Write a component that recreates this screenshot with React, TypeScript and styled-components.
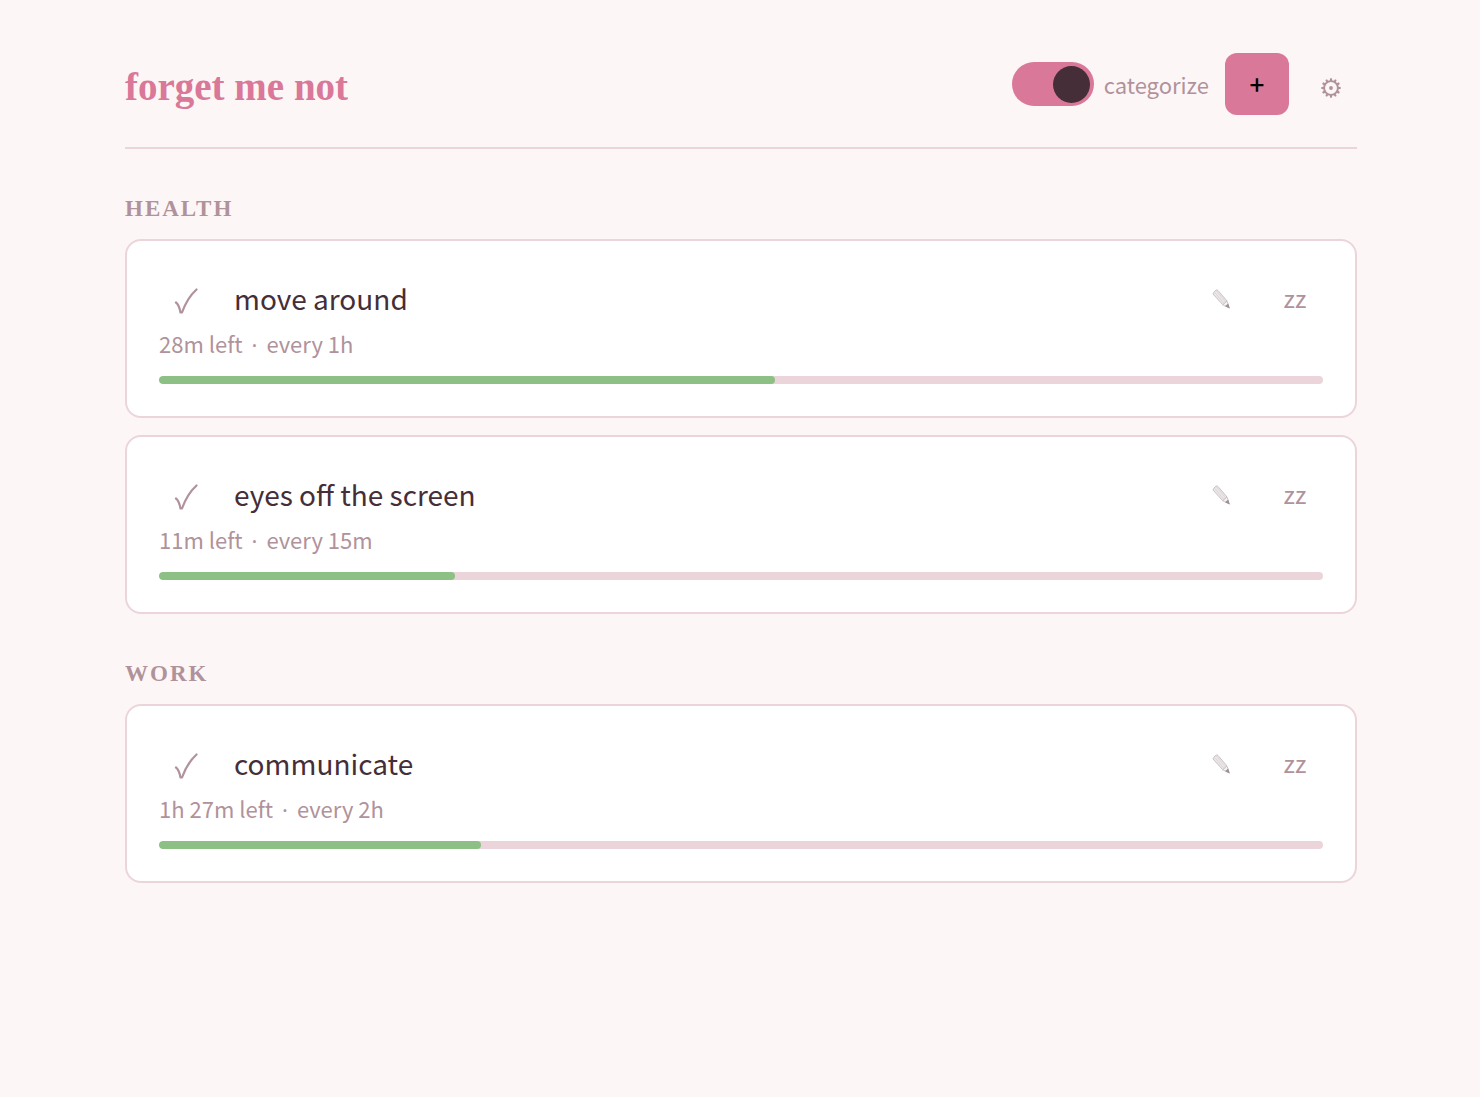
import React, { useState } from "react";
import styled, { createGlobalStyle } from "styled-components";

const color = {
  page: "#fdf6f6",
  card: "#ffffff",
  accent: "#d97898",
  line: "#ebd5da",
  text: "#452e38",
  muted: "#b0929b",
  fill: "#8cc084",
};

const sans = `"Noto Sans CJK SC", "Noto Sans", sans-serif`;
const serif = `"Liberation Serif", "Times New Roman", serif`;

const GlobalStyle = createGlobalStyle`
  * { box-sizing: border-box; }
  body {
    margin: 0;
    background: ${color.page};
    color: ${color.text};
    font-family: ${sans};
  }
`;

const Page = styled.main`
  padding: 53px 123px 64px 125px;
`;

const Header = styled.header`
  display: flex;
  align-items: center;
  justify-content: space-between;
  padding-bottom: 32px;
  border-bottom: 2px solid ${color.line};
`;

const Title = styled.h1`
  margin: 0;
  padding-top: 6px;
  font: 700 39px/54px ${serif};
  color: ${color.accent};
`;

const Controls = styled.div`
  display: flex;
  align-items: center;
  gap: 16px;
`;

const SwitchLabel = styled.label`
  display: flex;
  align-items: center;
  gap: 10px;
  font-size: 22px;
  line-height: 32px;
  color: ${color.muted};
  cursor: pointer;
`;

const Switch = styled.input`
  appearance: none;
  display: flex;
  align-items: center;
  width: 82px;
  height: 44px;
  margin: 0;
  padding: 4px;
  border-radius: 22px;
  background: ${color.line};
  cursor: pointer;

  &::before {
    content: "";
    width: 37px;
    height: 37px;
    border-radius: 50%;
    background: ${color.text};
  }

  &:checked {
    justify-content: flex-end;
    background: ${color.accent};
  }
`;

const AddButton = styled.button`
  width: 64px;
  height: 62px;
  padding: 0;
  border: 0;
  border-radius: 12px;
  background: ${color.accent};
  color: #000;
  font: 500 26px/62px ${sans};
  cursor: pointer;
`;

const IconButton = styled.button<{ $width: number }>`
  display: flex;
  align-items: center;
  justify-content: center;
  width: ${(p) => p.$width}px;
  height: 54px;
  padding: 0 0 2px;
  border: 0;
  background: none;
  color: ${color.muted};
  font: 400 24px/32px ${sans};
  cursor: pointer;
`;

const DoneButton = styled(IconButton)`
  padding: 2px 0 0;
`;

const SnoozeButton = styled(IconButton)`
  padding: 0 0 4px;
`;

const SettingsButton = styled(IconButton)`
  padding: 8px 0 0;
`;

const Group = styled.section`
  padding-top: 40px;
`;

const GroupTitle = styled.h2`
  margin: 0 0 10px;
  font: 700 23px/40px ${serif};
  letter-spacing: 2px;
  text-transform: uppercase;
  color: ${color.muted};
`;

const List = styled.ul`
  display: grid;
  gap: 17px;
  margin: 0;
  padding: 0;
  list-style: none;
`;

const Card = styled.li`
  padding: 32px;
  border: 2px solid ${color.line};
  border-radius: 16px;
  background: ${color.card};
`;

const Row = styled.div`
  display: flex;
  align-items: center;
  gap: 16px;
`;

const Name = styled.span`
  flex: 1;
  padding: 0 0 4px 5px;
  font-size: 28px;
  line-height: 50px;
`;

const Meta = styled.p`
  margin: 0 0 17px;
  font-size: 22px;
  line-height: 32px;
  color: ${color.muted};
`;

const Dot = styled.span`
  margin: 0 4px;
  font-family: "Noto Sans", sans-serif;
  line-height: 1;
`;

const Track = styled.div`
  height: 8px;
  overflow: hidden;
  border-radius: 4px;
  background: ${color.line};
`;

const Fill = styled.div`
  height: 100%;
  border-radius: 4px;
  background: ${color.fill};
`;

const CheckIcon = () => (
  <svg width="24" height="28" viewBox="0 0 24 28" fill="none" aria-hidden="true">
    <path
      d="M2 15.500C4 17 5.600 20.500 6.500 25.500H8C11 17 16 8.500 22.500 2.500"
      stroke="currentColor"
      strokeWidth="2.200"
      strokeLinecap="round"
      strokeLinejoin="round"
    />
  </svg>
);

const PencilIcon = () => (
  <svg width="20" height="22" viewBox="0 0 20 22" aria-hidden="true">
    <path
      d="M2 6Q2 4.500 5 2.200 6.300 1.500 7 2.500L16 13 11.800 16.800z"
      fill="#ebe6e8"
      stroke="#c9c2c5"
    />
    <path d="M3.700 4.500 13.100 15.500M5.500 3.100l9.300 10.900" stroke="#d6cfd2" strokeWidth=".7" />
    <path d="m11.800 16.800 4.200-3.800 2.300 7z" fill="#f6f2f4" stroke="#c3bbbe" strokeWidth=".8" />
    <path d="m14 18.200 3.200-2.800 1.600 5.200z" fill="#9a9095" />
  </svg>
);

const GearIcon = () => (
  <svg width="20" height="20" viewBox="0 0 20 20" fill="none" aria-hidden="true">
    <circle cx="10" cy="10" r="6.900" stroke="currentColor" strokeWidth="1.900" />
    <circle cx="10" cy="10" r="1.900" fill="currentColor" />
    {Array.from({ length: 12 }, (_, i) => (
      <path
        key={i}
        d="M8.700 3 9.100.3h1.800l.4 2.700z"
        fill="currentColor"
        transform={`rotate(${i * 30} 10 10)`}
      />
    ))}
  </svg>
);

type Reminder = { name: string; left: string; every: string; progress: number };

const groups: { title: string; items: Reminder[] }[] = [
  {
    title: "Health",
    items: [
      { name: "move around", left: "28m", every: "1h", progress: 52.9 },
      { name: "eyes off the screen", left: "11m", every: "15m", progress: 25.4 },
    ],
  },
  {
    title: "Work",
    items: [{ name: "communicate", left: "1h 27m", every: "2h", progress: 27.7 }],
  },
];

const ReminderCard = ({ name, left, every, progress }: Reminder) => (
  <Card>
    <Row>
      <DoneButton $width={54} aria-label={`Mark ${name} done`}>
        <CheckIcon />
      </DoneButton>
      <Name>{name}</Name>
      <IconButton $width={60} aria-label={`Edit ${name}`}>
        <PencilIcon />
      </IconButton>
      <SnoozeButton $width={56}>zz</SnoozeButton>
    </Row>
    <Meta>
      {left} left <Dot>·</Dot> every {every}
    </Meta>
    <Track>
      <Fill style={{ width: `${progress}%` }} />
    </Track>
  </Card>
);

export default function App() {
  const [categorize, setCategorize] = useState(true);

  return (
    <>
      <GlobalStyle />
      <Page>
        <Header>
          <Title>forget me not</Title>
          <Controls>
            <SwitchLabel>
              <Switch
                type="checkbox"
                checked={categorize}
                onChange={(e) => setCategorize(e.target.checked)}
              />
              categorize
            </SwitchLabel>
            <AddButton>+</AddButton>
            <SettingsButton $width={52} aria-label="Settings">
              <GearIcon />
            </SettingsButton>
          </Controls>
        </Header>
        {groups.map((group) => (
          <Group key={group.title}>
            <GroupTitle>{group.title}</GroupTitle>
            <List>
              {group.items.map((item) => (
                <ReminderCard key={item.name} {...item} />
              ))}
            </List>
          </Group>
        ))}
      </Page>
    </>
  );
}
